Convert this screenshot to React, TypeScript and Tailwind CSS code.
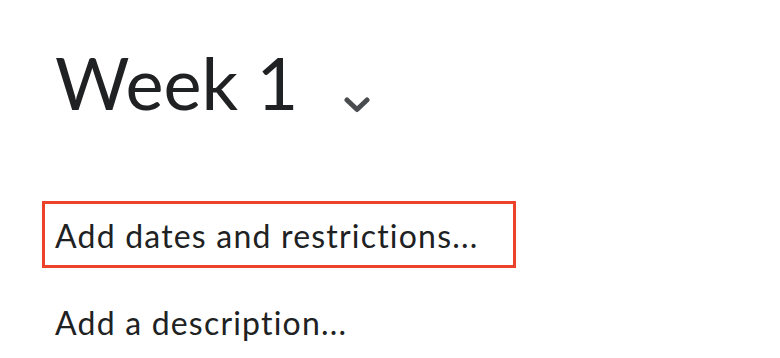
export default function App() {
  return (
    <div className="min-h-[358px] w-[780px] bg-white px-[55px] pt-[39px] text-[#202122] font-['Lato','Liberation_Sans',sans-serif] [font-variant-ligatures:none]">
      {/* Title */}
      <div className="flex items-start">
        <h1 className="text-[72px] leading-[87px] font-normal">Week 1</h1>
        <button className="ml-[46px] mt-[58px] text-[#494c4e]" aria-label="Expand">
          <svg width="26" height="16" viewBox="0 0 26 16" fill="none">
            <path
              d="M3 3 L13 12.5 L23 3"
              stroke="currentColor"
              strokeWidth={5}
              strokeLinecap="round"
              strokeLinejoin="round"
            />
          </svg>
        </button>
      </div>

      {/* Actions */}
      <div className="mt-[75px] flex flex-col gap-[20px] text-[32px] leading-[38px] tracking-[1.2px]">
        <div className="-mx-[13px] w-[474px] border-[3px] border-[#ec4229] px-[10px] pt-[13px] pb-[10px]">
          <span>Add dates and restrictions...</span>
        </div>
        <div className="-mx-[13px] w-[474px] border-[3px] border-transparent px-[10px] pt-[13px] pb-[10px]">
          <span>Add a description...</span>
        </div>
      </div>
    </div>
  );
}
